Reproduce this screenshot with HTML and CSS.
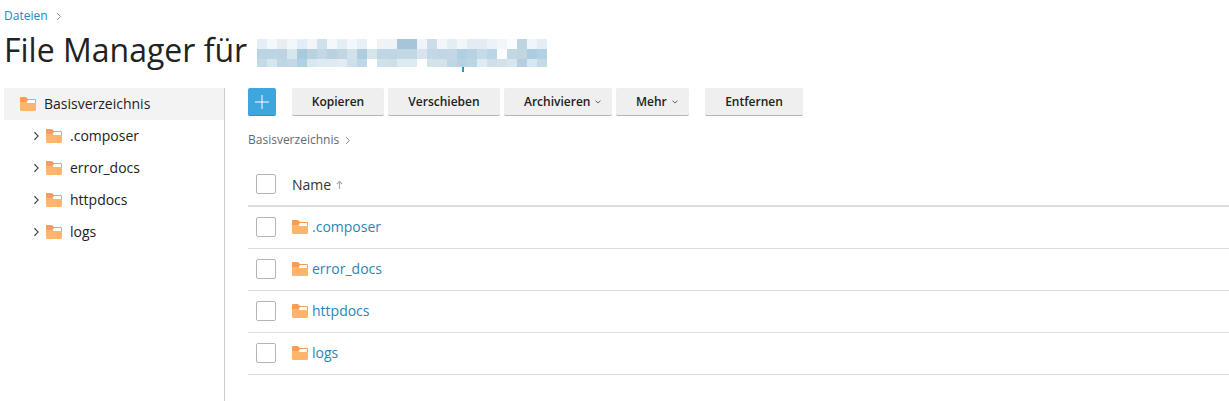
FILE: index.html
```html
<!DOCTYPE html>
<html lang="de">
<head>
<meta charset="utf-8">
<title>File Manager</title>
<link rel="stylesheet" href="styles.css">
</head>
<body>
<svg class="defs" width="0" height="0" aria-hidden="true">
  <symbol id="folder" viewBox="0 0 16 14">
    <path d="M0 1.200C0 .5.5 0 1.200 0h4.300c.4 0 .7.2 1 .5L8 2h6.800c.7 0 1.200.5 1.200 1.200V7H0z" fill="#f79c59"/>
    <path d="M6 6 8 3H15V6z" fill="#fff"/>
    <path d="M0 5h5.500c.4 0 .7-.1 1-.3L7.500 6H16v6.800c0 .7-.5 1.200-1.200 1.200H1.200C.5 14 0 13.500 0 12.800z" fill="#fdb56b"/>
  </symbol>
  <symbol id="chev" viewBox="0 0 8 12">
    <path d="M1.500 1.500 6 6l-4.500 4.500" fill="none" stroke="currentColor" stroke-width="1.300"/>
  </symbol>
</svg>

<nav class="crumb"><a class="crumb-link">Dateien</a><svg class="crumb-chev"><use href="#chev"/></svg></nav>

<h1 class="title">File Manager für
  <svg class="blur" width="290" height="33" viewBox="0 0 290 33" aria-hidden="true" shape-rendering="crispEdges">
    <g id="r1">
      <rect x="0" y="0" width="10" height="10" fill="#e6eef5"/><rect x="10" y="0" width="10" height="10" fill="#f4f8fb"/><rect x="20" y="0" width="10" height="10" fill="#e6eef4"/><rect x="30" y="0" width="10" height="10" fill="#f2f7fa"/><rect x="40" y="0" width="10" height="10" fill="#e2eef5"/><rect x="50" y="0" width="10" height="10" fill="#f2f5f8"/><rect x="60" y="0" width="10" height="10" fill="#cfe1ea"/><rect x="70" y="0" width="10" height="10" fill="#f5f8fb"/><rect x="80" y="0" width="10" height="10" fill="#e2edf4"/><rect x="90" y="0" width="10" height="10" fill="#f4f7fa"/><rect x="100" y="0" width="10" height="10" fill="#e7f0f6"/><rect x="120" y="0" width="10" height="10" fill="#eef3f7"/><rect x="130" y="0" width="10" height="10" fill="#eef3f7"/><rect x="140" y="0" width="20" height="10" fill="#a6c5da"/><rect x="160" y="0" width="10" height="10" fill="#eef4f9"/><rect x="170" y="0" width="10" height="10" fill="#cbdde9"/><rect x="180" y="0" width="10" height="10" fill="#f2f6fa"/><rect x="190" y="0" width="10" height="10" fill="#e2eef3"/><rect x="200" y="0" width="10" height="10" fill="#f1f6f9"/><rect x="210" y="0" width="20" height="10" fill="#e3ecf2"/><rect x="230" y="0" width="10" height="10" fill="#edf2f6"/><rect x="240" y="0" width="10" height="10" fill="#f0f6f9"/><rect x="250" y="0" width="10" height="10" fill="#fafcfd"/><rect x="260" y="0" width="10" height="10" fill="#c0d4e0"/><rect x="270" y="0" width="10" height="10" fill="#eef5fc"/><rect x="280" y="0" width="10" height="10" fill="#e3edf3"/>
    </g>
    <g id="r2">
      <rect x="0" y="10" width="20" height="10" fill="#bcd5e4"/><rect x="20" y="10" width="10" height="10" fill="#bdd3e2"/><rect x="30" y="10" width="10" height="10" fill="#d7e5ec"/><rect x="40" y="10" width="10" height="10" fill="#a8cbdc"/><rect x="50" y="10" width="10" height="10" fill="#b8d2e0"/><rect x="60" y="10" width="10" height="10" fill="#c3d8e4"/><rect x="70" y="10" width="10" height="10" fill="#b9d2e0"/><rect x="80" y="10" width="10" height="10" fill="#c0d6e3"/><rect x="90" y="10" width="10" height="10" fill="#d3e1ea"/><rect x="100" y="10" width="10" height="10" fill="#aecde0"/><rect x="110" y="10" width="10" height="10" fill="#d5e5ec"/><rect x="120" y="10" width="20" height="10" fill="#c0d6e4"/><rect x="140" y="10" width="20" height="10" fill="#c2d9e4"/><rect x="160" y="10" width="10" height="10" fill="#d7e4ef"/><rect x="170" y="10" width="10" height="10" fill="#c3d7e7"/><rect x="180" y="10" width="10" height="10" fill="#c0d6e5"/><rect x="190" y="10" width="10" height="10" fill="#c5d7e5"/><rect x="200" y="10" width="10" height="10" fill="#aed0e2"/><rect x="210" y="10" width="10" height="10" fill="#b8d2e1"/><rect x="220" y="10" width="10" height="10" fill="#c5dbe9"/><rect x="230" y="10" width="10" height="10" fill="#bad5e3"/><rect x="240" y="10" width="10" height="10" fill="#fafcfd"/><rect x="250" y="10" width="10" height="10" fill="#c3d7e4"/><rect x="260" y="10" width="10" height="10" fill="#c3d5e1"/><rect x="270" y="10" width="10" height="10" fill="#a9cde1"/><rect x="280" y="10" width="10" height="10" fill="#b2d1e2"/>
    </g>
    <g id="r3">
      <rect x="0" y="20" width="10" height="8" fill="#c4dae6"/><rect x="10" y="20" width="10" height="8" fill="#d5e6ec"/><rect x="20" y="20" width="10" height="8" fill="#bed5e3"/><rect x="30" y="20" width="10" height="8" fill="#c3d9e7"/><rect x="40" y="20" width="10" height="8" fill="#b0d1e2"/><rect x="50" y="20" width="10" height="8" fill="#d9e8ef"/><rect x="60" y="20" width="20" height="8" fill="#ddeaf0"/><rect x="80" y="20" width="10" height="8" fill="#e0ecf1"/><rect x="90" y="20" width="10" height="8" fill="#cfe0ea"/><rect x="100" y="20" width="10" height="8" fill="#bfd7e6"/><rect x="120" y="20" width="10" height="8" fill="#cfe1ea"/><rect x="130" y="20" width="10" height="8" fill="#cde0ea"/><rect x="140" y="20" width="20" height="8" fill="#dcebf1"/><rect x="170" y="20" width="20" height="8" fill="#d2e3ea"/><rect x="190" y="20" width="10" height="8" fill="#bdd7e7"/><rect x="200" y="20" width="10" height="8" fill="#b6d2e3"/><rect x="210" y="20" width="10" height="8" fill="#bad6e4"/><rect x="220" y="20" width="10" height="8" fill="#dfebf3"/><rect x="230" y="20" width="10" height="8" fill="#cfe0ea"/><rect x="240" y="20" width="10" height="8" fill="#d2e1ea"/><rect x="250" y="20" width="10" height="8" fill="#d6e6ec"/><rect x="260" y="20" width="10" height="8" fill="#b5cfe1"/><rect x="270" y="20" width="10" height="8" fill="#d6e7ef"/><rect x="280" y="20" width="10" height="8" fill="#c4dbe7"/>
    </g>
    <rect x="205" y="28" width="2" height="5" fill="#2f93c9"/>
  </svg>
</h1>

<div class="layout">
  <aside class="tree">
    <div class="tree-row tree-root"><svg class="folder"><use href="#folder"/></svg><span class="tree-label">Basisverzeichnis</span></div>
    <div class="tree-row"><svg class="tree-chev"><use href="#chev"/></svg><svg class="folder"><use href="#folder"/></svg><span class="tree-label">.composer</span></div>
    <div class="tree-row"><svg class="tree-chev"><use href="#chev"/></svg><svg class="folder"><use href="#folder"/></svg><span class="tree-label">error_docs</span></div>
    <div class="tree-row"><svg class="tree-chev"><use href="#chev"/></svg><svg class="folder"><use href="#folder"/></svg><span class="tree-label">httpdocs</span></div>
    <div class="tree-row"><svg class="tree-chev"><use href="#chev"/></svg><svg class="folder"><use href="#folder"/></svg><span class="tree-label">logs</span></div>
  </aside>

  <main class="main">
    <div class="toolbar">
      <button class="btn-add" aria-label="Neu"><svg width="14" height="14" viewBox="0 0 14 14"><path d="M7 0v14M0 7h14" stroke="#fff" stroke-width="1"/></svg></button>
      <button class="btn btn-kop">Kopieren</button>
      <button class="btn btn-ver">Verschieben</button>
      <button class="btn btn-drop btn-arc">Archivieren<svg class="caret" width="6" height="4" viewBox="0 0 6 4"><path d="M.5.7 3 3 5.500.7" fill="none" stroke="#666" stroke-width="1"/></svg></button>
      <button class="btn btn-drop btn-meh">Mehr<svg class="caret" width="6" height="4" viewBox="0 0 6 4"><path d="M.5.7 3 3 5.500.7" fill="none" stroke="#666" stroke-width="1"/></svg></button>
      <button class="btn btn-ent">Entfernen</button>
    </div>

    <div class="path">Basisverzeichnis<svg class="path-chev"><use href="#chev"/></svg></div>

    <div class="table">
      <div class="row head"><span class="check"></span><span class="name-head">Name</span><svg class="sort" width="7" height="9" viewBox="0 0 7 9"><path d="M3.500 9V1.500M.8 4.200 3.500 1.500l2.700 2.700" fill="none" stroke="#aaa" stroke-width="1.200"/></svg></div>
      <div class="row"><span class="check"></span><svg class="folder"><use href="#folder"/></svg><a class="file">.composer</a></div>
      <div class="row"><span class="check"></span><svg class="folder"><use href="#folder"/></svg><a class="file">error_docs</a></div>
      <div class="row"><span class="check"></span><svg class="folder"><use href="#folder"/></svg><a class="file">httpdocs</a></div>
      <div class="row"><span class="check"></span><svg class="folder"><use href="#folder"/></svg><a class="file">logs</a></div>
    </div>
  </main>
</div>
</body>
</html>
```

FILE: styles.css
```css
* { box-sizing: border-box; }
html, body { height: 100%; }
body {
  margin: 0;
  height: 401px;
  overflow: hidden;
  background: #fff;
  color: #222;
  font-family: "Open Sans", "DejaVu Sans", sans-serif;
  font-size: 14px;
}
.defs { position: absolute; }

.crumb {
  display: flex;
  align-items: center;
  height: 16px;
  margin: 8px 0 0 4px;
  font-size: 12px;
  line-height: 16px;
}
.crumb-link { color: #2a86b8; }
.crumb-chev { width: 6px; height: 9px; margin-left: 8px; color: #8a8a8a; }

.title {
  display: flex;
  align-items: flex-start;
  height: 39px;
  margin: 6px 0 0 4px;
  font-size: 32px;
  font-weight: 400;
  line-height: 39px;
  color: #222;
  white-space: nowrap;
}
.blur { flex: none; margin: 9px 0 0 10px; }

.layout {
  display: flex;
  margin: 19px 0 0 4px;
  height: 313px;
}
.tree {
  flex: none;
  width: 221px;
  border-right: 1px solid #ccc;
}
.tree-row {
  display: flex;
  align-items: center;
  height: 32px;
  padding-left: 29px;
  color: #222;
}
.tree-root {
  padding-left: 16px;
  background: #f3f3f3;
}
.tree-chev { width: 7px; height: 10px; color: #444; margin-right: 6px; }
.tree-label { margin-bottom: 2px; }
.folder { flex: none; width: 16px; height: 14px; }
.tree-row .folder { margin-right: 8px; }

.main { flex: 1; min-width: 0; margin-left: 23px; }

.toolbar { display: flex; height: 28px; }
.btn-add {
  display: flex;
  align-items: center;
  justify-content: center;
  flex: none;
  width: 28px;
  height: 28px;
  margin: 0 16px 0 0;
  padding: 0;
  background: #3ea6df;
  border: 0;
  border-bottom: 1px solid #3390c4;
  border-radius: 2px;
}
.btn {
  display: flex;
  align-items: center;
  justify-content: center;
  flex: none;
  height: 28px;
  margin: 0 4px 0 0;
  padding: 0;
  background: #efefef;
  border: 0;
  border-bottom: 1px solid #b5b5b5;
  border-radius: 2px;
  color: #222;
  font-family: inherit;
  font-size: 12px;
  font-weight: 600;
}
.btn-drop { justify-content: flex-start; padding-left: 20px; }
.btn-kop { width: 92px; }
.btn-ver { width: 112px; }
.btn-arc { width: 108px; }
.btn-meh { width: 73px; margin-right: 16px; }
.btn-ent { width: 98px; }
.caret { margin-left: 5px; }

.path {
  display: flex;
  align-items: center;
  height: 16px;
  margin-top: 16px;
  font-size: 12px;
  line-height: 16px;
  color: #5f6b74;
}
.path-chev { width: 6px; height: 9px; margin-left: 6px; color: #8a8a8a; }

.table { margin-top: 16px; }
.row {
  display: flex;
  align-items: center;
  height: 42px;
  padding: 0 0 1px 8px;
  border-bottom: 1px solid #ddd;
}
.row.head { height: 43px; border-bottom: 2px solid #ddd; }
.check {
  flex: none;
  width: 20px;
  height: 20px;
  margin-right: 16px;
  background: #fff;
  border: 1px solid #b5b5b5;
  border-radius: 2px;
}
.name-head { color: #333; }
.sort { margin-left: 5px; }
.file { margin: 0 0 2px 4px; color: #2a86b8; }
```
